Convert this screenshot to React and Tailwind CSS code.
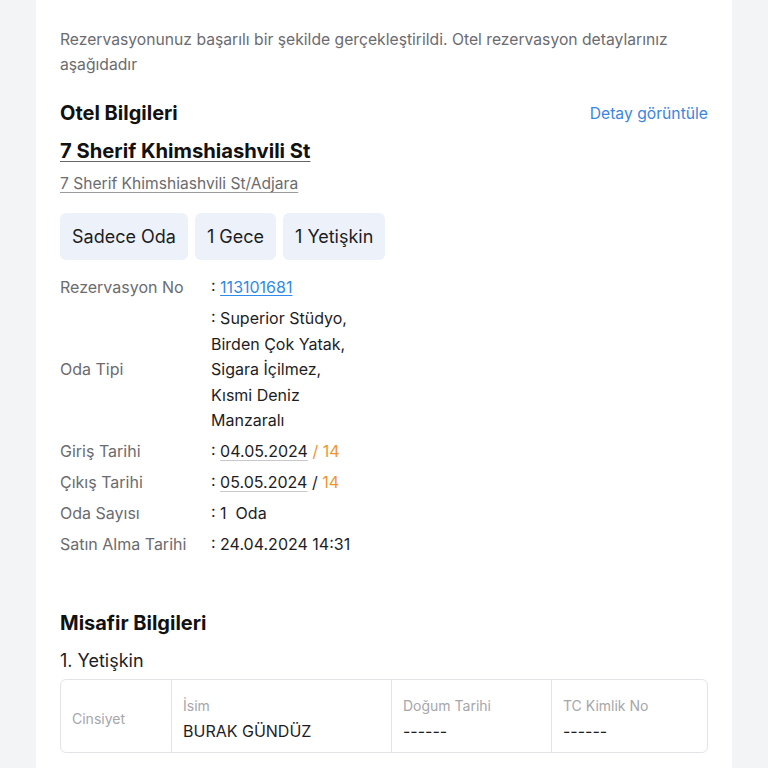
export default function App() {
  const font = { fontFamily: 'Inter, "Noto Sans", sans-serif' };
  return (
    <div className="min-h-screen bg-[#f3f4f6] px-[36px]" style={font}>
      <div className="bg-white px-6 pt-[27px] pb-10">
        <p className="text-[15.7px] leading-[25px] text-[#6b6b70]">
          Rezervasyonunuz başarılı bir şekilde gerçekleştirildi. Otel rezervasyon detaylarınız aşağıdadır
        </p>

        <div className="mt-[22px] flex items-end justify-between">
          <h2 className="text-[20px] leading-[28px] font-bold text-[#111]">Otel Bilgileri</h2>
          <a className="text-[15.7px] leading-[26px] text-[#3a85e0]">Detay görüntüle</a>
        </div>

        <h3 className="mt-[10px] text-[20.2px] leading-[28px] font-bold text-[#111] underline decoration-1 underline-offset-[3px] decoration-[#666]">
          7 Sherif Khimshiashvili St
        </h3>
        <p className="mt-[8px] text-[15.6px] leading-[22px] text-[#6b6b70] underline decoration-1 underline-offset-[3px] decoration-[#9a9a9f]">
          7 Sherif Khimshiashvili St/Adjara
        </p>

        <div className="mt-[18px] flex gap-[7px]">
          {["Sadece Oda", "1 Gece", "1 Yetişkin"].map((t) => (
            <div key={t} className="h-[47px] flex items-center px-3 rounded-md bg-[#edf2fa] text-[18px] text-[#1d1d1f]">
              {t}
            </div>
          ))}
        </div>

        <div className="mt-[15px] flex flex-col gap-[5.6px] text-[16px] leading-[25.5px]">
          <Row label="Rezervasyon No">
            : <span className="text-[#2f8ae8] underline decoration-1 underline-offset-2">113101681</span>
          </Row>
          <Row label="Oda Tipi">
            <span className="block w-[145px]">: Superior Stüdyo, Birden Çok Yatak, Sigara İçilmez, Kısmi Deniz Manzaralı</span>
          </Row>
          <Row label="Giriş Tarihi">
            : <span className="underline decoration-1 underline-offset-[3px] decoration-[#c8c8cc]">04.05.2024</span>{" "}
            <span className="text-[#f0952e]">/ 14</span>
          </Row>
          <Row label="Çıkış Tarihi">
            : <span className="underline decoration-1 underline-offset-[3px] decoration-[#c8c8cc]">05.05.2024</span> /{" "}
            <span className="text-[#f0952e]">14</span>
          </Row>
          <Row label="Oda Sayısı">: 1&nbsp; Oda</Row>
          <Row label="Satın Alma Tarihi">: 24.04.2024 14:31</Row>
        </div>

        <h2 className="mt-[51px] text-[20px] leading-[28px] font-bold text-[#111]">Misafir Bilgileri</h2>
        <p className="mt-[11px] text-[18px] leading-[26px] text-[#1d1d1f]">1. Yetişkin</p>

        <div className="mt-[5px] h-[74px] flex border border-[#e3e4e8] rounded-md">
          <div className="w-[110px] flex items-center px-[11px] pt-[5px] text-[14px] text-[#a6a6ab]">Cinsiyet</div>
          <Cell w="w-[220px]" label="İsim" value="BURAK GÜNDÜZ" />
          <Cell w="w-[160px]" label="Doğum Tarihi" value="------" />
          <Cell w="flex-1" label="TC Kimlik No" value="------" />
        </div>
      </div>
    </div>
  );
}

function Row({ label, children }) {
  return (
    <div className="flex items-center">
      <div className="w-[151px] shrink-0 text-[#6b6b70]">{label}</div>
      <div className="text-[#1d1d1f]">{children}</div>
    </div>
  );
}

function Cell({ w, label, value }) {
  return (
    <div className={`${w} border-l border-[#e3e4e8] px-[11px] pt-[7px] flex flex-col justify-center`}>
      <div className="text-[14px] leading-[20px] text-[#a6a6ab]">{label}</div>
      <div className="mt-[4px] text-[16px] leading-[22px] text-[#1d1d1f]">{value}</div>
    </div>
  );
}
